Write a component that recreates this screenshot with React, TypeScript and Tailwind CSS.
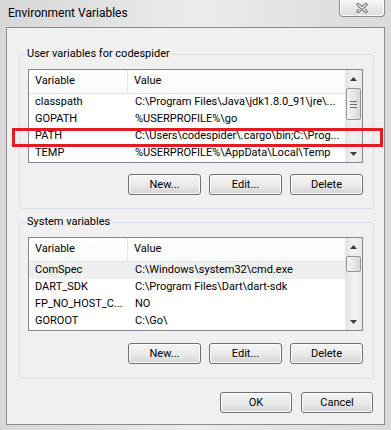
import React from 'react';

type Row = { name: string; value: string; hot?: boolean };

const userVars: Row[] = [
    { name: 'classpath', value: 'C:\\Program Files\\Java\\jdk1.8.0_91\\jre\\...' },
    { name: 'GOPATH', value: '%USERPROFILE%\\go' },
    { name: 'PATH', value: 'C:\\Users\\codespider\\.cargo\\bin;C:\\Prog...' },
    { name: 'TEMP', value: '%USERPROFILE%\\AppData\\Local\\Temp' },
];

const systemVars: Row[] = [
    { name: 'ComSpec', value: 'C:\\Windows\\system32\\cmd.exe', hot: true },
    { name: 'DART_SDK', value: 'C:\\Program Files\\Dart\\dart-sdk' },
    { name: 'FP_NO_HOST_C...', value: 'NO' },
    { name: 'GOROOT', value: 'C:\\Go\\' },
];

const WinButton: React.FC<{ label: string; width?: string }> = ({ label, width = 'w-[73px]' }) => (
    <button
        className={`${width} h-[21px] rounded-[3px] border border-[#707070] bg-linear-to-b from-[#f4f4f4] via-[#ebebeb] to-[#d4d4d4] shadow-[inset_0_0_0_1px_#fcfcfc] text-[11px] leading-none text-black`}
    >
        {label}
    </button>
);

const Arrow: React.FC<{ up?: boolean }> = ({ up }) => (
    <div className="h-[17px] flex items-center justify-center">
        <svg width="7" height="4" viewBox="0 0 7 4">
            {up ? <path d="M0 4 L3.5 0 L7 4 Z" fill="#3c3c3c" /> : <path d="M0 0 L3.5 4 L7 0 Z" fill="#3c3c3c" />}
        </svg>
    </div>
);

const ScrollBar: React.FC<{ thumbTop: string; thumbHeight: string; grip?: boolean }> = ({ thumbTop, thumbHeight, grip }) => (
    <div className="w-[17px] flex flex-col bg-linear-to-r from-[#e3e3e3] via-[#f2f2f2] to-[#eaeaea]">
        <Arrow up />
        <div className="flex-1 px-[1px]">
            <div
                className={`${thumbTop} ${thumbHeight} rounded-[2px] border border-[#969696] bg-linear-to-r from-[#f4f4f4] to-[#d9d9d9] flex flex-col items-center justify-center gap-[2px]`}
            >
                {grip && (
                    <>
                        <div className="w-[7px] h-[1px] bg-[#6f6f6f]" />
                        <div className="w-[7px] h-[1px] bg-[#6f6f6f]" />
                        <div className="w-[7px] h-[1px] bg-[#6f6f6f]" />
                    </>
                )}
            </div>
        </div>
        <Arrow />
    </div>
);

const VarList: React.FC<{ rows: Row[]; thumbTop: string; thumbHeight: string; grip?: boolean }> = ({ rows, thumbTop, thumbHeight, grip }) => (
    <div className="w-[335px] h-[94px] border border-[#828790] bg-white flex">
        <div className="flex-1 flex flex-col">
            <div className="h-[24px] flex border-b border-[#e5e5e5] bg-linear-to-b from-white to-[#fafbfc]">
                <div className="w-[99px] pl-[6px] flex items-center border-r border-[#e5e5e5]">Variable</div>
                <div className="flex-1 pl-[6px] flex items-center">Value</div>
            </div>
            {rows.map((row) => (
                <div key={row.name} className={`h-[17px] flex items-center ${row.hot ? 'bg-[#efefef]' : ''}`}>
                    <div className="w-[99px] pl-[6px] whitespace-nowrap overflow-hidden">{row.name}</div>
                    <div className="flex-1 pl-[7px] whitespace-nowrap overflow-hidden">{row.value}</div>
                </div>
            ))}
        </div>
        <ScrollBar thumbTop={thumbTop} thumbHeight={thumbHeight} grip={grip} />
    </div>
);

const GroupBox: React.FC<{ title: string; className: string; children: React.ReactNode }> = ({ title, className, children }) => (
    <div className={`relative w-[355px] border border-[#d5dfe5] rounded-[3px] pl-[8px] pt-[14px] ${className}`}>
        <span className="absolute -top-[8px] left-[6px] px-[1px] bg-[#f0f0f0] leading-[14px]">{title}</span>
        {children}
    </div>
);

export default function App() {
    return (
        <div className="relative w-[391px] h-[430px] overflow-hidden bg-linear-to-r from-[#d7d7d7] via-[#ececec] to-[#dadada] font-['Roboto',sans-serif] text-[11px] text-black">
            <div className="h-[27px] flex items-start">
                <span className="ml-[8px] mt-[6px] text-[12px] leading-[14px]">Environment Variables</span>
                <div className="ml-auto mr-[6px] w-[46px] h-[17px] rounded-b-[4px] border border-t-0 border-[#8d8d8d] bg-linear-to-b from-[#f6f6f6] to-[#dcdcdc] shadow-[inset_0_0_0_1px_#fafafa] flex items-center justify-center">
                    <svg width="12" height="10" viewBox="0 0 12 10">
                        <path d="M2 1.5 L10 8.5 M10 1.5 L2 8.5" stroke="#6a6a6a" strokeWidth="3.2" strokeLinecap="round" />
                        <path d="M2 1.5 L10 8.5 M10 1.5 L2 8.5" stroke="#f4f4f4" strokeWidth="1.3" strokeLinecap="round" />
                    </svg>
                </div>
            </div>

            <div className="ml-[6px] w-[379px] h-[398px] border border-[#8b8b8b] bg-[#f0f0f0] flex flex-col pl-[12px]">
                <GroupBox title="User variables for codespider" className="mt-[26px] pb-[13px]">
                    <VarList rows={userVars} thumbTop="mt-[1px]" thumbHeight="h-[32px]" grip />
                    <div className="w-[335px] mt-[11px] flex justify-end gap-[8px]">
                        <WinButton label="New..." />
                        <WinButton label="Edit..." />
                        <WinButton label="Delete" />
                    </div>
                </GroupBox>

                <GroupBox title="System variables" className="mt-[13px] pb-[14px]">
                    <VarList rows={systemVars} thumbTop="mt-[1px]" thumbHeight="h-[16px]" />
                    <div className="w-[335px] mt-[12px] flex justify-end gap-[8px]">
                        <WinButton label="New..." />
                        <WinButton label="Edit..." />
                        <WinButton label="Delete" />
                    </div>
                </GroupBox>

                <div className="w-[355px] mt-[13px] pr-[1px] flex justify-end gap-[9px]">
                    <WinButton label="OK" width="w-[72px]" />
                    <WinButton label="Cancel" width="w-[72px]" />
                </div>
            </div>

            <div className="absolute left-[12px] top-[128px] w-[371px] h-[19px] border-[3px] border-[#e31b23]" />
        </div>
    );
}
